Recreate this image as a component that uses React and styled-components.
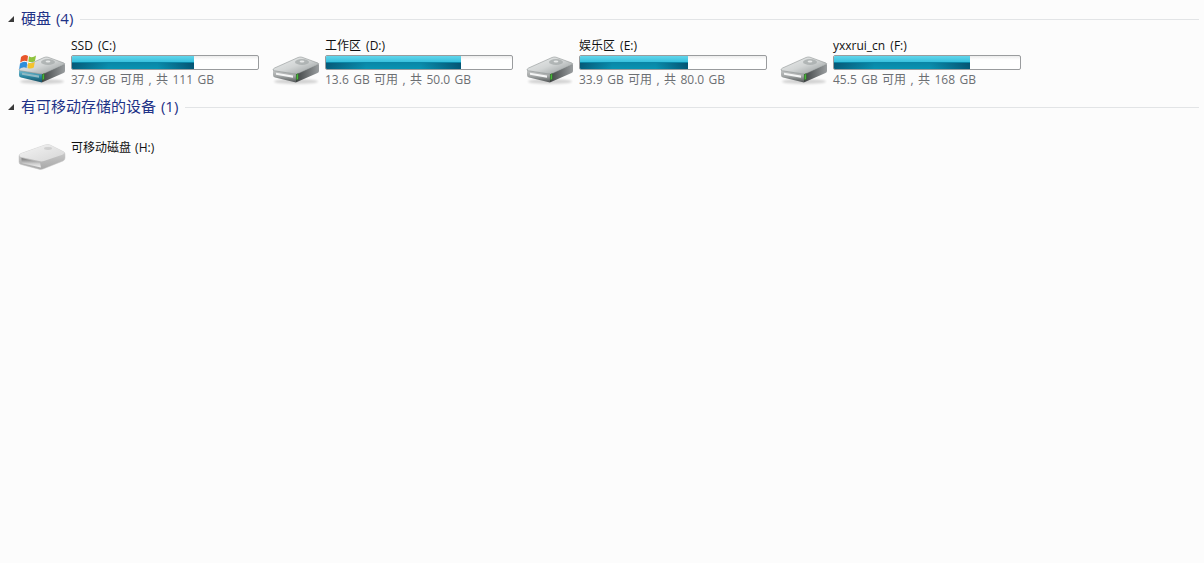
import styled, { createGlobalStyle } from "styled-components";

const GlobalStyle = createGlobalStyle`
  html, body {
    margin: 0;
    height: 100%;
    background: #fcfcfc;
  }
  body {
    font-family: "Open Sans", "Noto Sans CJK SC", sans-serif;
  }
`;

const disks = [
  { name: "SSD (C:)", free: "37.9 GB 可用 , 共 111 GB", used: 65.6, win: true },
  { name: "工作区 (D:)", free: "13.6 GB 可用 , 共 50.0 GB", used: 72.6 },
  { name: "娱乐区 (E:)", free: "33.9 GB 可用 , 共 80.0 GB", used: 57.8 },
  { name: "yxxrui_cn (F:)", free: "45.5 GB 可用 , 共 168 GB", used: 72.9 },
];

const DiskIcon = ({ win }) => (
  <IconSvg $top={15} viewBox="0 0 48 34" width="48" height="34">
    <defs>
      <linearGradient id="diskTop" x1="0" y1="0" x2="1" y2="1">
        <stop offset="0" stopColor="#eceeee" />
        <stop offset="0.5" stopColor="#d2d5d5" />
        <stop offset="1" stopColor="#8f9596" />
      </linearGradient>
      <linearGradient id="diskFront" x1="0" y1="0" x2="0" y2="1">
        <stop offset="0" stopColor="#c9cbcb" />
        <stop offset="0.5" stopColor="#a3a6a6" />
        <stop offset="1" stopColor="#4f5354" />
      </linearGradient>
      <linearGradient id="diskSide" x1="0" y1="0" x2="1" y2="0">
        <stop offset="0" stopColor="#3f4344" />
        <stop offset="1" stopColor="#9a9ea0" />
      </linearGradient>
      <linearGradient id="diskBlue" x1="0" y1="0" x2="0" y2="1">
        <stop offset="0" stopColor="#7fc2d6" />
        <stop offset="0.5" stopColor="#2e8aa5" />
        <stop offset="1" stopColor="#174f63" />
      </linearGradient>
      <filter id="soft" x="-20%" y="-50%" width="140%" height="200%">
        <feGaussianBlur stdDeviation="1" />
      </filter>
    </defs>
    <ellipse cx="24" cy="29.5" rx="22" ry="2.6" fill="#000" opacity="0.16" filter="url(#soft)" />
    {/* side face */}
    <path d="M24 22 L47 12 L47 19 Q47 20.5 45.5 21 L25 30 Q24 30.4 24 30 Z" fill="url(#diskSide)" />
    {/* front face */}
    <path d="M1 18 L24 22 L24 30.4 L3 25.5 Q1 25 1 23 Z" fill={win ? "url(#diskBlue)" : "url(#diskFront)"} />
    {/* top face */}
    <path d="M1 18 Q0.8 17 2.5 16 L26 5.5 Q28 4.6 30 5.2 L46 11 Q47.5 11.8 46 12.6 L26 21.6 Q24.5 22.3 22.5 21.9 L2.5 18.8 Q1.4 18.6 1 18 Z" fill="url(#diskTop)" stroke="#7f8485" strokeWidth="0.5" />
    <ellipse cx="30" cy="10" rx="7" ry="3" fill="#a4a9aa" opacity="0.75" />
    <ellipse cx="30" cy="9.6" rx="2.4" ry="1" fill="#e6e8e8" />
    {/* slot */}
    <path d="M4 20.8 L21 23.6 L21 25.8 L4 22.8 Z" fill={win ? "#8fb9c4" : "#f4f5f5"} />
    {/* led */}
    <path d="M24.3 22.5 L26.3 21.6 L26.3 27.2 L24.3 28.2 Z" fill="#49c43a" stroke="#2b4a26" strokeWidth="0.4" />
    {win && (
      <g>
        <path d="M3 5 Q6.5 1.5 10 4 L9.3 9.5 Q6 7.5 2.2 10.5 Z" fill="#e8562a" />
        <path d="M11 4.2 Q14 6.4 18 3.5 L17 9 Q13.8 11 10.3 9.6 Z" fill="#8fc43e" />
        <path d="M2 11.5 Q5.5 8.7 9.2 10.5 L8.6 16 Q5.2 14 1.2 17 Z" fill="#2f8edb" />
        <path d="M10.2 10.6 Q13.6 12 16.8 10 L15.8 15.6 Q12.8 17.2 9.6 16 Z" fill="#f5c32c" />
      </g>
    )}
  </IconSvg>
);

const RemovableIcon = () => (
  <IconSvg $top={27} viewBox="0 0 48 28" width="48" height="28">
    <defs>
      <linearGradient id="remTop" x1="0" y1="0" x2="1" y2="1">
        <stop offset="0" stopColor="#f4f4f4" />
        <stop offset="1" stopColor="#d6d6d6" />
      </linearGradient>
      <linearGradient id="remFront" x1="0" y1="0" x2="0" y2="1">
        <stop offset="0" stopColor="#d8d8d8" />
        <stop offset="1" stopColor="#a8a8a8" />
      </linearGradient>
      <linearGradient id="remSlot" x1="0" y1="0" x2="0" y2="1">
        <stop offset="0" stopColor="#777" />
        <stop offset="0.6" stopColor="#cfcfcf" />
        <stop offset="1" stopColor="#f2f2f2" />
      </linearGradient>
    </defs>
    <path d="M1 13 Q1 11.5 3 10.5 L27 2 Q30 1 32 2 L46 9 Q47 10 47 12 L47 15 Q47 17 45 18 L25 26 Q23 26.8 21 26.2 L3 21.5 Q1 21 1 19 Z" fill="url(#remFront)" stroke="#c4c4c4" strokeWidth="0.5" />
    <path d="M1.5 12.5 Q1.5 11.5 3 10.5 L27 2 Q30 1 32 2 L46 9 Q47 10 45 11.5 L26 18 Q23.5 18.8 21 18 L3 14 Q1.5 13.5 1.5 12.5 Z" fill="url(#remTop)" />
    <path d="M3.5 15 L22 19.5 L23 24.5 L5 20.5 Q3.5 20 3.5 18 Z" fill="url(#remSlot)" />
    <ellipse cx="30" cy="5.5" rx="4" ry="1.4" fill="#c9c9c9" opacity="0.8" />
  </IconSvg>
);

const App = () => (
  <Page>
    <GlobalStyle />
    <Group>
      <GroupHeader>
        <Caret />
        <GroupTitle>硬盘 (4)</GroupTitle>
        <Rule />
      </GroupHeader>
      <DiskRow>
        {disks.map((disk) => (
          <Disk key={disk.name}>
            <DiskIcon win={disk.win} />
            <DiskInfo>
              <DiskName>{disk.name}</DiskName>
              <Bar>
                <BarFill style={{ width: `${disk.used}%` }} />
              </Bar>
              <DiskFree>{disk.free}</DiskFree>
            </DiskInfo>
          </Disk>
        ))}
      </DiskRow>
    </Group>
    <Group>
      <GroupHeader>
        <Caret />
        <GroupTitle>有可移动存储的设备 (1)</GroupTitle>
        <Rule />
      </GroupHeader>
      <RemovableRow>
        <RemovableIcon />
        <RemovableName>可移动磁盘 (H:)</RemovableName>
      </RemovableRow>
    </Group>
  </Page>
);

const Page = styled.div`
  min-height: 563px;
  background: #fcfcfc;
  padding: 10px 5px 0 8px;
  box-sizing: border-box;
`;
const Group = styled.section`
  display: flex;
  flex-direction: column;
`;
const GroupHeader = styled.div`
  display: flex;
  align-items: center;
  height: 18px;
`;
const Caret = styled.span`
  width: 0;
  height: 0;
  margin-right: 7px;
  border-style: solid;
  border-width: 0 0 6px 6px;
  border-color: transparent transparent #3a3a3a transparent;
`;
const GroupTitle = styled.span`
  font-size: 15px;
  line-height: 18px;
  padding-bottom: 2px;
  word-spacing: 1px;
  color: #1e3287;
  white-space: nowrap;
  margin-right: 7px;
`;
const Rule = styled.div`
  flex: 1;
  height: 1px;
  background: #e2e4e6;
`;
const DiskRow = styled.div`
  display: flex;
  padding: 9px 0 0 10px;
  height: 61px;
`;
const Disk = styled.div`
  display: flex;
  width: 254px;
  flex-shrink: 0;
`;
const IconSvg = styled.svg`
  flex-shrink: 0;
  margin-top: ${({ $top }) => $top}px;
  margin-right: 5px;
  display: block;
`;
const DiskInfo = styled.div`
  display: flex;
  flex-direction: column;
  width: 188px;
`;
const DiskName = styled.div`
  font-size: 12px;
  line-height: 18px;
  word-spacing: 2px;
  color: #111;
  white-space: nowrap;
`;
const Bar = styled.div`
  height: 13px;
  border: 1px solid #9a9c9e;
  border-radius: 2px;
  background: linear-gradient(#ececec, #fff 30%);
  overflow: hidden;
`;
const BarFill = styled.div`
  height: 100%;
  background:
    linear-gradient(90deg, rgba(0, 30, 60, 0.45), rgba(0, 0, 0, 0) 30%, rgba(0, 0, 0, 0) 70%, rgba(0, 30, 60, 0.5)) 0 100% / 100% 50% no-repeat,
    linear-gradient(#62d6ec 0%, #36bfdc 48%, #0a86a6 50%, #0993b2 100%);
`;
const DiskFree = styled.div`
  font-size: 12px;
  line-height: 18px;
  margin-top: 1px;
  word-spacing: 1.3px;
  color: #6c6f73;
  white-space: nowrap;
`;
const RemovableRow = styled.div`
  display: flex;
  padding-left: 10px;
  height: 60px;
`;
const RemovableName = styled.div`
  font-size: 12px;
  line-height: 16px;
  word-spacing: 1px;
  color: #111;
  margin-top: 24px;
  white-space: nowrap;
`;

export default App;
